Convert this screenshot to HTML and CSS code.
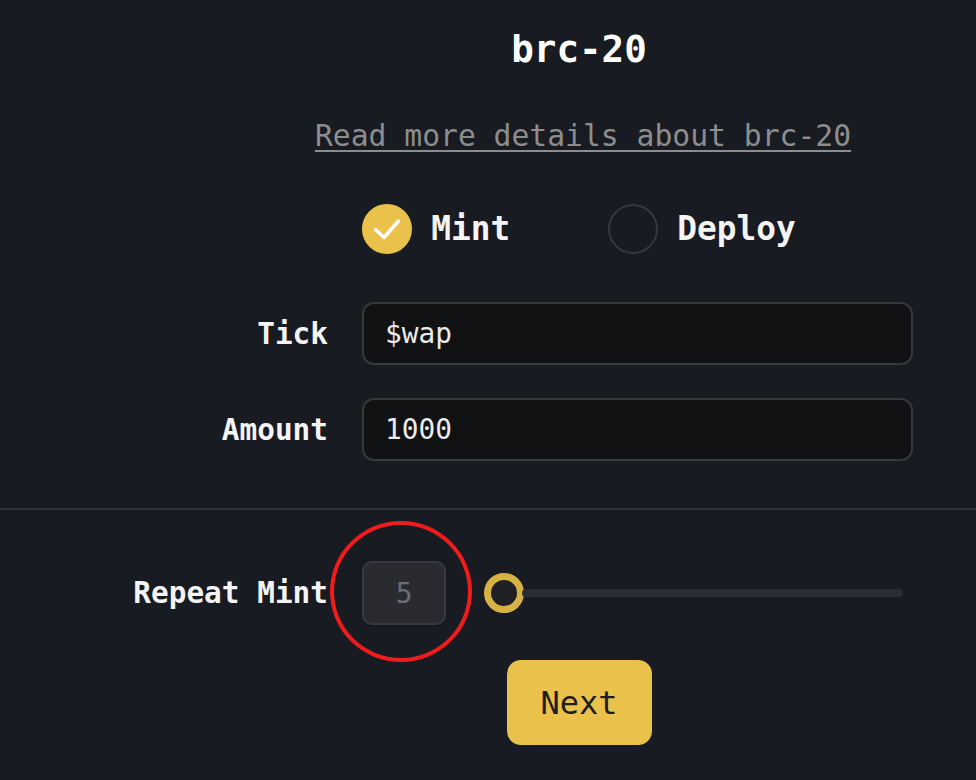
FILE: index.html
```html
<!DOCTYPE html>
<html lang="en">
<head>
<meta charset="utf-8">
<title>brc-20</title>
<link rel="stylesheet" href="styles.css">
</head>
<body>
<div class="page">
  <div class="center-col">
    <h1 class="title">brc-20</h1>
    <a class="details-link" href="#">Read more details about brc-20</a>
    <div class="radios">
      <div class="radio">
        <span class="dot dot-checked">
          <svg width="46" height="46" viewBox="0 0 46 46"><path d="M11.5 23.5 L20 31.5 L34.5 15" fill="none" stroke="#ffffff" stroke-width="3.5" stroke-linecap="round" stroke-linejoin="round"/></svg>
        </span>
        <span class="radio-text">Mint</span>
      </div>
      <div class="radio">
        <span class="dot"></span>
        <span class="radio-text">Deploy</span>
      </div>
    </div>
  </div>

  <div class="form">
    <div class="row">
      <div class="label">Tick</div>
      <div class="input">$wap</div>
    </div>
    <div class="row">
      <div class="label">Amount</div>
      <div class="input">1000</div>
    </div>
  </div>

  <div class="divider"></div>

  <div class="row repeat-row">
    <div class="label">Repeat Mint</div>
    <div class="repeat-controls">
      <div class="num-wrap">
        <div class="num-box">5</div>
        <span class="ring"></span>
      </div>
      <div class="slider">
        <span class="thumb"></span>
        <span class="track"></span>
      </div>
    </div>
  </div>

  <div class="center-col">
    <button class="next">Next</button>
  </div>
</div>
</body>
</html>
```

FILE: styles.css
```css
html, body {
  margin: 0;
  padding: 0;
  background: #181b21;
}

body {
  font-family: "DejaVu Sans Mono", "Liberation Mono", monospace;
  color: #f2f2f2;
}

.page {
  width: 976px;
  height: 780px;
  overflow: hidden;
  padding-top: 27px;
  box-sizing: border-box;
}

.center-col {
  margin-left: 182px;
  width: 794px;
  display: flex;
  flex-direction: column;
  align-items: center;
}

.title {
  margin: 0;
  font-size: 37.5px;
  line-height: 44px;
  height: 44px;
  font-weight: bold;
  color: #ffffff;
}

.details-link {
  margin-top: 45px;
  padding-left: 8px;
  font-size: 29.7px;
  line-height: 40px;
  color: #8d8d8d;
  text-decoration: underline;
  text-decoration-thickness: 2px;
  text-underline-offset: 4px;
}

.radios {
  margin-top: 47px;
  height: 52px;
  display: flex;
  align-items: center;
  gap: 98px;
}

.radio {
  display: flex;
  align-items: center;
  gap: 19px;
}

.dot {
  width: 50px;
  height: 50px;
  border-radius: 50%;
  border: 2px solid #35373b;
  box-sizing: border-box;
  display: flex;
  align-items: center;
  justify-content: center;
}

.dot-checked {
  background: #eac14a;
  border-color: #eac14a;
}

.radio-text {
  font-size: 32.8px;
  font-weight: bold;
  line-height: 44px;
  color: #f4f4f4;
}

.form {
  margin-top: 47px;
  display: flex;
  flex-direction: column;
  gap: 33px;
}

.row {
  display: flex;
  align-items: center;
}

.label {
  width: 328px;
  flex: none;
  text-align: right;
  white-space: nowrap;
  font-size: 29.4px;
  font-weight: bold;
  color: #f4f4f4;
  margin-right: 34px;
}

.input {
  width: 551px;
  height: 63px;
  box-sizing: border-box;
  background: #111214;
  border: 2px solid #36383c;
  border-radius: 12px;
  padding-left: 21px;
  display: flex;
  align-items: center;
  font-size: 27.8px;
  color: #ebebeb;
}

.divider {
  margin-top: 47px;
  height: 2px;
  background: #2f3237;
}

.repeat-row {
  margin-top: 51px;
  height: 64px;
}

.repeat-controls {
  display: flex;
  align-items: center;
  gap: 38px;
}

.num-wrap {
  position: relative;
}

.num-box {
  width: 84px;
  height: 64px;
  box-sizing: border-box;
  background: #2a2b30;
  border: 2px solid #38393e;
  border-radius: 10px;
  display: flex;
  align-items: center;
  justify-content: center;
  font-size: 27.8px;
  color: #6c6d72;
}

.ring {
  position: absolute;
  left: -32px;
  top: -40px;
  width: 142px;
  height: 141px;
  border: 4.5px solid #f01c1c;
  border-radius: 50%;
  box-sizing: border-box;
  pointer-events: none;
}

.slider {
  display: flex;
  align-items: center;
  width: 419px;
}

.thumb {
  width: 40px;
  height: 40px;
  border-radius: 50%;
  border: 7px solid #d6b244;
  background: #1f2024;
  box-sizing: border-box;
  flex: none;
}

.track {
  flex: 1;
  height: 8px;
  border-radius: 4px;
  background: #2b2c32;
  margin-left: -2px;
}

.next {
  margin-top: 35px;
  width: 145px;
  height: 85px;
  border: none;
  border-radius: 14px;
  background: #eac14a;
  font-family: "DejaVu Sans Mono", "Liberation Mono", monospace;
  font-size: 32px;
  color: #1d1d1d;
  padding: 0;
  cursor: pointer;
}
```
